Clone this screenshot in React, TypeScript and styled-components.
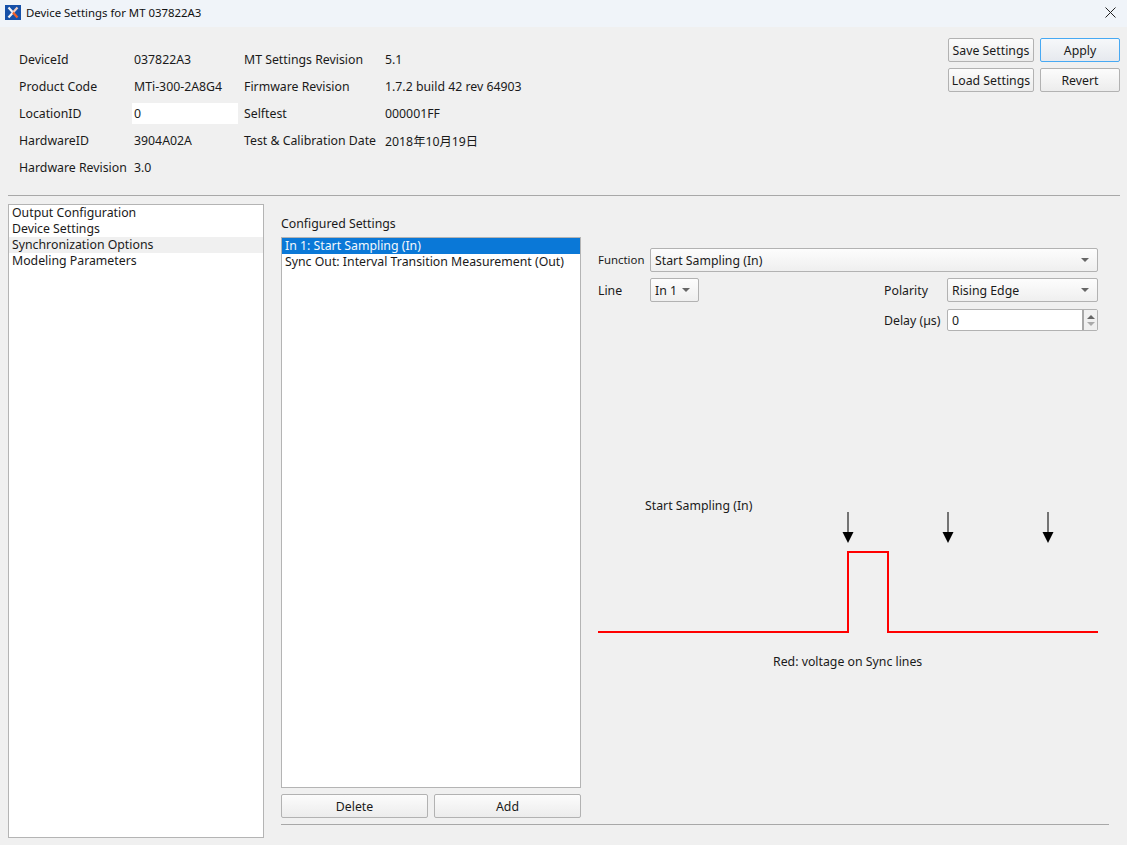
import React from "react";
import styled, { createGlobalStyle, css } from "styled-components";

const Global = createGlobalStyle`
  html, body { margin: 0; padding: 0; background: #f0f0f0; }
  body { font-family: "Noto Sans", "Noto Sans CJK SC", "Liberation Sans", sans-serif; font-size: 12.3px; color: #1a1a1a; }
  * { box-sizing: border-box; }
`;

const Page = styled.div`
  width: 1127px;
  height: 845px;
  overflow: hidden;
  background: #f0f0f0;
  display: flex;
  flex-direction: column;
`;

const TitleBar = styled.div`
  height: 27px;
  flex: none;
  background: #f0f4f9;
  display: flex;
  align-items: center;
  padding: 0 11px 3px 5px;
  gap: 5px;
`;
const TitleText = styled.span`
  flex: 1;
  font-size: 11.4px;
  color: #111;
`;

const Header = styled.header`
  height: 168px;
  flex: none;
  display: flex;
  justify-content: space-between;
  padding: 11px 7px 0 19px;
`;
const InfoGrid = styled.div`
  margin-top: 8px;
  display: grid;
  grid-template-columns: 115px 110px 141px auto;
  grid-auto-rows: 27px;
  align-items: center;
  align-content: start;
`;
const InfoText = styled.span`
  white-space: nowrap;
`;
const LocationInput = styled.div`
  width: 106px;
  height: 21px;
  margin-left: -2px;
  padding-left: 2px;
  background: #fff;
  display: flex;
  align-items: center;
`;
const ButtonGrid = styled.div`
  display: grid;
  grid-template-columns: 86px 80px;
  grid-auto-rows: 24px;
  gap: 6px;
  align-content: start;
`;
const Button = styled.button<{ $primary?: boolean }>`
  font: inherit;
  color: #1a1a1a;
  padding: 0;
  height: 24px;
  white-space: nowrap;
  border-radius: 2px;
  border: 1px solid #b2b2b2;
  background: linear-gradient(#fcfcfc, #ececec);
  ${(p) =>
    p.$primary &&
    css`
      border-color: #47a9f3;
      background: linear-gradient(#f6f8fa, #e6e9ee);
    `}
`;

const Divider = styled.div`
  height: 1px;
  flex: none;
  background: #a8a8a8;
  margin: 0 7px 0 8px;
`;
const WorkspaceDivider = styled.div`
  height: 1px;
  flex: none;
  background: #a8a8a8;
`;

const Main = styled.main`
  flex: 1;
  display: flex;
  gap: 17px;
  padding: 8px 0 0 8px;
  min-height: 0;
`;
const ListBox = styled.div`
  background: #fff;
  border: 1px solid #b4b4b4;
  padding: 0;
`;
const Sidebar = styled(ListBox)`
  width: 256px;
  height: 634px;
  flex: none;
`;
const Row = styled.div<{ $state?: "hover" | "selected" }>`
  height: 16px;
  line-height: 15px;
  padding-left: 3px;
  white-space: nowrap;
  ${(p) => p.$state === "hover" && css`background: #f0f0f0;`}
  ${(p) => p.$state === "selected" && css`background: #0a78d7; color: #f4f9fd;`}
`;
const Workspace = styled.div`
  width: 828px;
  display: flex;
  flex-direction: column;
`;
const WorkspaceTop = styled.div`
  height: 620px;
  flex: none;
  display: flex;
  gap: 17px;
`;
const ConfigColumn = styled.section`
  width: 300px;
  flex: none;
  display: flex;
  flex-direction: column;
`;
const ConfigLabel = styled.div`
  height: 33px;
  flex: none;
  padding-top: 11px;
  line-height: 18px;
`;
const ConfigList = styled(ListBox)`
  height: 551px;
  flex: none;
`;
const ConfigButtons = styled.div`
  margin-top: 6px;
  display: grid;
  grid-template-columns: 147px 147px;
  gap: 6px;
`;
const OptionsColumn = styled.section`
  width: 500px;
  flex: none;
  display: flex;
  flex-direction: column;
  padding-top: 44px;
`;
const OptionRow = styled.div`
  display: flex;
  align-items: center;
  height: 24px;
`;
const OptionGap = styled(OptionRow)`
  margin-top: 6px;
`;
const DelayRow = styled(OptionRow)`
  height: 22px;
  margin-top: 7px;
  justify-content: flex-end;
`;
const OptionLabel = styled.label<{ $w: number; $small?: boolean }>`
  width: ${(p) => p.$w}px;
  flex: none;
  white-space: nowrap;
  ${(p) => p.$small && css`font-size: 11.4px; padding-bottom: 1px;`}
`;
const Combo = styled.div<{ $w: number }>`
  width: ${(p) => p.$w}px;
  height: 24px;
  flex: none;
  display: flex;
  align-items: center;
  justify-content: space-between;
  padding: 0 8px 0 4px;
  border: 1px solid #b2b2b2;
  border-radius: 2px;
  background: linear-gradient(#fdfdfd, #efefef);
  white-space: nowrap;
`;
const Caret = styled.span`
  width: 0;
  height: 0;
  border-left: 4px solid transparent;
  border-right: 4px solid transparent;
  border-top: 4px solid #666;
`;
const Spacer = styled.div`
  flex: 1;
`;
const SpinBox = styled.div`
  width: 151px;
  height: 22px;
  flex: none;
  display: flex;
  border: 1px solid #b2b2b2;
  border-radius: 2px;
  background: #fff;
  overflow: hidden;
`;
const SpinValue = styled.div`
  flex: 1;
  padding-left: 4px;
  line-height: 21px;
  border-right: 2px solid #a8a8a8;
`;
const SpinArrows = styled.div`
  width: 13px;
  flex: none;
  background: #f0f0f0;
  display: flex;
  flex-direction: column;
  align-items: center;
  justify-content: center;
  gap: 3px;
`;
const SpinUp = styled.span`
  border-left: 4px solid transparent;
  border-right: 4px solid transparent;
  border-bottom: 4px solid #666;
`;
const SpinDown = styled.span`
  border-left: 4px solid transparent;
  border-right: 4px solid transparent;
  border-top: 4px solid #aaa;
`;
const DiagramLabel = styled.div`
  margin: 166px 0 0 47px;
  height: 18px;
  line-height: 18px;
`;
const DiagramSvg = styled.svg`
  display: block;
  margin-top: -11px;
`;
const DiagramCaption = styled.div`
  margin: 17px 0 0 0;
  padding-left: 175px;
  height: 18px;
  line-height: 18px;
`;

const Logo = () => (
  <svg width="16" height="15" viewBox="0 0 16 15" style={{ flex: "none" }}>
    <rect width="16" height="15" fill="#1650a8" />
    <path d="M3.5 2.5 L8 7.5 L3.5 12.5" fill="none" stroke="#f2f2f4" strokeWidth="2.2" />
    <path d="M12.5 2.5 L8 7.5" fill="none" stroke="#f0cfc4" strokeWidth="2.2" />
    <path d="M8 7.5 L12.5 12.5" fill="none" stroke="#f0602a" strokeWidth="2.4" />
  </svg>
);

const CloseIcon = () => (
  <svg width="11" height="11" viewBox="0 0 11 11" style={{ flex: "none" }}>
    <path d="M0.5 0.5 L10.5 10.5 M10.5 0.5 L0.5 10.5" stroke="#222" strokeWidth="1" fill="none" />
  </svg>
);

const Arrow = ({ x }: { x: number }) => (
  <g>
    <line x1={x} y1="8" x2={x} y2="30" stroke="#555" strokeWidth="1.6" />
    <polygon points={`${x - 5.5},28 ${x + 5.5},28 ${x},39`} fill="#000" />
  </g>
);

const info: [string, React.ReactNode, string, string][] = [
  ["DeviceId", "037822A3", "MT Settings Revision", "5.1"],
  ["Product Code", "MTi-300-2A8G4", "Firmware Revision", "1.7.2 build 42 rev 64903"],
  ["LocationID", <LocationInput key="loc">0</LocationInput>, "Selftest", "000001FF"],
  ["HardwareID", "3904A02A", "Test & Calibration Date", "2018年10月19日"],
  ["Hardware Revision", "3.0", "", ""],
];

export default function App() {
  return (
    <Page>
      <Global />
      <TitleBar>
        <Logo />
        <TitleText>Device Settings for MT 037822A3</TitleText>
        <CloseIcon />
      </TitleBar>
      <Header>
        <InfoGrid>
          {info.map((r, i) => (
            <React.Fragment key={i}>
              <InfoText>{r[0]}</InfoText>
              <InfoText>{r[1]}</InfoText>
              <InfoText>{r[2]}</InfoText>
              <InfoText>{r[3]}</InfoText>
            </React.Fragment>
          ))}
        </InfoGrid>
        <ButtonGrid>
          <Button>Save Settings</Button>
          <Button $primary>Apply</Button>
          <Button>Load Settings</Button>
          <Button>Revert</Button>
        </ButtonGrid>
      </Header>
      <Divider />
      <Main>
        <Sidebar>
          <Row>Output Configuration</Row>
          <Row>Device Settings</Row>
          <Row $state="hover">Synchronization Options</Row>
          <Row>Modeling Parameters</Row>
        </Sidebar>
        <Workspace>
          <WorkspaceTop>
            <ConfigColumn>
              <ConfigLabel>Configured Settings</ConfigLabel>
              <ConfigList>
                <Row $state="selected">In 1: Start Sampling (In)</Row>
                <Row>Sync Out: Interval Transition Measurement (Out)</Row>
              </ConfigList>
              <ConfigButtons>
                <Button>Delete</Button>
                <Button>Add</Button>
              </ConfigButtons>
            </ConfigColumn>
            <OptionsColumn>
              <OptionRow>
                <OptionLabel $w={52} $small>Function</OptionLabel>
                <Combo $w={448}>Start Sampling (In)<Caret /></Combo>
              </OptionRow>
              <OptionGap>
                <OptionLabel $w={52}>Line</OptionLabel>
                <Combo $w={49}>In 1<Caret /></Combo>
                <Spacer />
                <OptionLabel $w={63}>Polarity</OptionLabel>
                <Combo $w={151}>Rising Edge<Caret /></Combo>
              </OptionGap>
              <DelayRow>
                <OptionLabel $w={63}>Delay (µs)</OptionLabel>
                <SpinBox>
                  <SpinValue>0</SpinValue>
                  <SpinArrows>
                    <SpinUp />
                    <SpinDown />
                  </SpinArrows>
                </SpinBox>
              </DelayRow>
              <DiagramLabel>Start Sampling (In)</DiagramLabel>
              <DiagramSvg width="500" height="132" viewBox="0 0 500 132">
                <Arrow x={250} />
                <Arrow x={350} />
                <Arrow x={450} />
                <path
                  d="M0 128 H250 V48 H290 V128 H500"
                  fill="none"
                  stroke="#ff0000"
                  strokeWidth="2"
                />
              </DiagramSvg>
              <DiagramCaption>Red: voltage on Sync lines</DiagramCaption>
            </OptionsColumn>
          </WorkspaceTop>
          <WorkspaceDivider />
        </Workspace>
      </Main>
    </Page>
  );
}
